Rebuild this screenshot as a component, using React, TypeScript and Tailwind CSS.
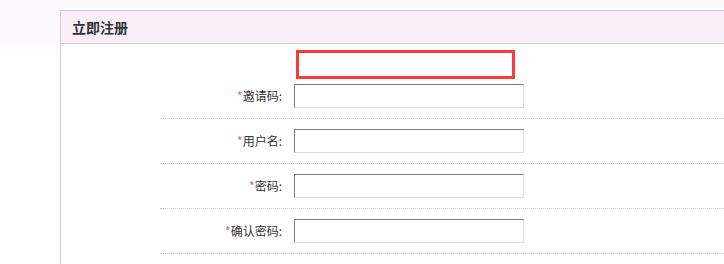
const fields = ['邀请码', '用户名', '密码', '确认密码']

function FormRow({ label, first }: { label: string; first?: boolean }) {
  return (
    <div
      className={`flex items-center border-b border-dotted border-[#c8c8c8] pb-[10px] ${
        first ? 'pt-[5px]' : 'pt-[10px]'
      }`}
    >
      <label className="w-[124px] pr-[2px] text-right text-[12px] leading-[24px] text-[#333]">
        <span className="text-[#f0568a]">*</span>
        {label}:
      </label>
      <input
        type="text"
        className="ml-[10px] h-[24px] w-[230px] border border-b-[#dcdcdc] border-l-[#7f7f7f] border-r-[#dcdcdc] border-t-[#7f7f7f] bg-white px-1 text-[12px] outline-none"
      />
    </div>
  )
}

export default function App() {
  return (
    <div
      className="h-[264px] w-full overflow-hidden bg-[linear-gradient(to_bottom,#faf8fb_0px,#fcfafc_40px,#ffffff_56px)] pl-[60px] pt-[10px]"
      style={{ fontFamily: '"Noto Sans CJK SC", "Noto Sans", sans-serif' }}
    >
      <div className="h-[300px] w-[720px] border border-r-0 border-[#cfcfcf] bg-white">
        <div className="flex h-[33px] items-center border-b border-[#cfcfcf] bg-[#f9eef7] pl-[11px]">
          <h2 className="text-[14px] font-bold text-[#333]">立即注册</h2>
        </div>
        <div className="ml-[235px] mt-[6px] h-[29px] w-[219px] border-[3px] border-[#ff3838]" />
        <div className="ml-[99px]">
          {fields.map((f, i) => (
            <FormRow key={f} label={f} first={i === 0} />
          ))}
        </div>
      </div>
    </div>
  )
}
